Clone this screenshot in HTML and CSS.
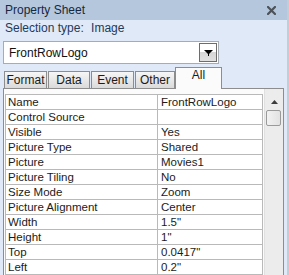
FILE: index.html
```html
<!DOCTYPE html>
<html lang="en">
<head>
    <meta charset="UTF-8">
    <title>Property Sheet</title>
    <link rel="stylesheet" href="styles.css">
</head>
<body>
    <div class="sheet">
        <div class="titlebar">
            <span class="title">Property Sheet</span>
            <svg class="close" width="9" height="9" viewBox="0 0 9 9">
                <path d="M1 1 L8 8 M8 1 L1 8" stroke="#4d5259" stroke-width="2.2" stroke-linecap="square"/>
            </svg>
        </div>
        <div class="seltype">Selection type: <span class="seltype-value">Image</span></div>
        <div class="combo">
            <span class="combo-text">FrontRowLogo</span>
            <div class="combo-btn">
                <svg width="9" height="6" viewBox="0 0 9 6">
                    <path d="M0 0 H9 L4.5 4.5 Z" fill="#000"/>
                    <rect x="4" y="4" width="1" height="2" fill="#000"/>
                </svg>
            </div>
        </div>
        <div class="tabs">
            <div class="tab tab-format">Format</div>
            <div class="tab tab-data">Data</div>
            <div class="tab tab-event">Event</div>
            <div class="tab tab-other">Other</div>
            <div class="tab active">All</div>
        </div>
        <div class="panel">
            <table class="grid">
                <tr><td class="label">Name</td><td class="value">FrontRowLogo</td></tr>
                <tr><td class="label">Control Source</td><td class="value"></td></tr>
                <tr><td class="label">Visible</td><td class="value">Yes</td></tr>
                <tr><td class="label">Picture Type</td><td class="value">Shared</td></tr>
                <tr><td class="label">Picture</td><td class="value">Movies1</td></tr>
                <tr><td class="label">Picture Tiling</td><td class="value">No</td></tr>
                <tr><td class="label">Size Mode</td><td class="value">Zoom</td></tr>
                <tr><td class="label">Picture Alignment</td><td class="value">Center</td></tr>
                <tr><td class="label">Width</td><td class="value">1.5"</td></tr>
                <tr><td class="label">Height</td><td class="value">1"</td></tr>
                <tr><td class="label">Top</td><td class="value">0.0417"</td></tr>
                <tr><td class="label">Left</td><td class="value">0.2"</td></tr>
            </table>
            <div class="scrollbar">
                <div class="arrow-up">
                    <svg width="7" height="4" viewBox="0 0 7 4"><path d="M0 4 L3.5 0 L7 4 Z" fill="#3c3c3c"/></svg>
                </div>
                <div class="thumb"></div>
            </div>
        </div>
    </div>
</body>
</html>
```

FILE: styles.css
```css
body {
    margin: 0;
    background-color: #dfe9f7;
}

.sheet {
    width: 289px;
    height: 275px;
    overflow: hidden;
    box-sizing: border-box;
    border-right: 2px solid #c4ccd6;
    background-color: #dfe9f7;
    font-family: "Liberation Sans", Arial, sans-serif;
    font-size: 11.5px;
    color: #1b1b1b;
}

/* header strip */
.titlebar {
    height: 20px;
    display: flex;
    align-items: center;
    justify-content: space-between;
    padding: 0 11px 0 5px;
    background-color: #b5c7dd;
}

.title {
    color: #15283f;
    font-size: 12px;
}

.close {
    display: block;
}

.seltype {
    height: 21px;
    line-height: 16px;
    padding-left: 5px;
    color: #1e3a5c;
    font-size: 12px;
}

.seltype-value {
    margin-left: 4px;
}

/* dropdown */
.combo {
    display: flex;
    align-items: center;
    justify-content: space-between;
    box-sizing: border-box;
    width: 216px;
    height: 23px;
    margin-left: 3px;
    border: 1px solid #a6acb3;
    background-color: #fff;
    padding: 0 1px 0 5px;
}

.combo-text {
    font-size: 12px;
    color: #111;
}

.combo-btn {
    box-sizing: border-box;
    width: 18px;
    height: 19px;
    border: 1px solid #6d6d6d;
    background: linear-gradient(#ffffff, #ffffff 45%, #d6d6d6 50%, #e0e0e0);
    display: flex;
    align-items: center;
    justify-content: center;
}

.combo-btn svg {
    display: block;
}

/* tabs */
.tabs {
    display: flex;
    align-items: flex-end;
    height: 21px;
    margin-top: 3px;
    padding-left: 4px;
}

.tab {
    box-sizing: border-box;
    height: 17px;
    margin-right: 1px;
    border: 1px solid #8d8d8d;
    border-bottom: none;
    background: linear-gradient(#f6f6f6, #e8e8e8 50%, #dadada);
    text-align: center;
    line-height: 16px;
    font-size: 12px;
    color: #1b1b1b;
}

.tab-format { width: 43px; }
.tab-data { width: 42px; }
.tab-event { width: 43px; }
.tab-other { width: 40px; margin-right: 0; }

.tab.active {
    width: 47px;
    height: 22px;
    margin-bottom: -1px;
    background: #fbfbfb;
    line-height: 14px;
    position: relative;
    z-index: 1;
}

/* property grid */
.panel {
    display: flex;
    align-items: flex-start;
    margin-left: 3px;
    width: 281px;
    height: 200px;
    box-sizing: border-box;
    border: 1px solid #8d8d8d;
    border-bottom: none;
    background-color: #fbfbfb;
    padding: 5px 0 0 1px;
}

.grid {
    border-collapse: collapse;
    background-color: #fff;
    width: 259px;
}

.grid td {
    height: 14px;
    padding: 0 0 0 2px;
    border: 1px solid #b9b9b9;
    line-height: 14px;
    white-space: nowrap;
}

.grid .label {
    width: 149px;
}

.grid .value {
    padding-left: 3px;
}

.scrollbar {
    width: 18px;
    height: 200px;
    margin-left: 1px;
    margin-top: -5px;
    background-color: #ececec;
    border-left: 1px solid #e0e0e0;
}

.arrow-up {
    height: 17px;
    display: flex;
    align-items: center;
    justify-content: center;
    padding-top: 4px;
}

.thumb {
    box-sizing: border-box;
    width: 15px;
    height: 16px;
    margin-left: 1px;
    border: 1px solid #9a9a9a;
    border-radius: 2px;
    background: linear-gradient(90deg, #f2f2f2, #e2e2e2);
}
```
